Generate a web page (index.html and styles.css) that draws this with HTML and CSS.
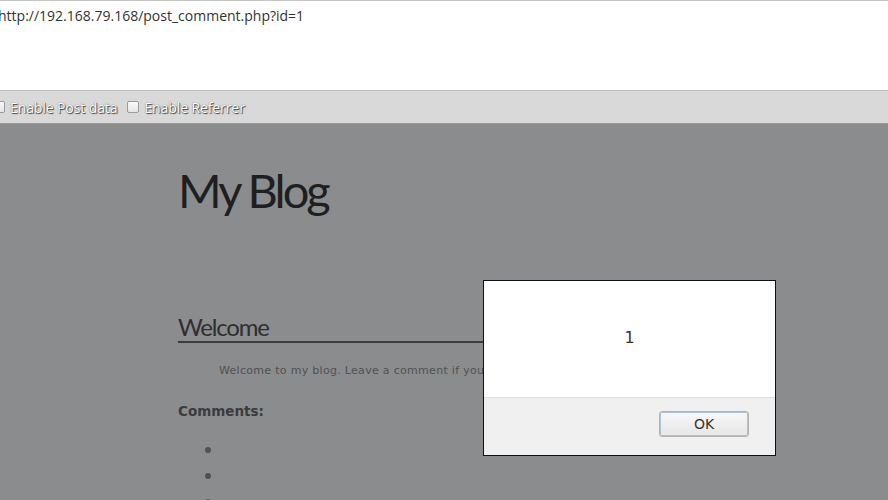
FILE: index.html
```html
<!DOCTYPE html>
<html>
<head>
<meta charset="utf-8">
<link rel="stylesheet" href="styles.css">
</head>
<body>
<div class="urlbox"><div class="url">http://192.168.79.168/post_comment.php?id=1</div></div>
<div class="toolbar">
  <label class="opt"><span class="cb"></span>Enable Post data</label>
  <label class="opt"><span class="cb"></span>Enable Referrer</label>
</div>
<div class="page">
  <div class="content">
    <h1 class="title">My Blog</h1>
    <h2 class="post-title">Welcome</h2>
    <p class="post-body">Welcome to my blog. Leave a comment if you like.</p>
    <div class="comments-h">Comments:</div>
    <ul class="comments">
      <li></li>
      <li></li>
      <li></li>
    </ul>
  </div>
  <div class="dialog">
    <div class="dlg-msg">1</div>
    <div class="dlg-foot"><button class="ok">OK</button></div>
  </div>
</div>
</body>
</html>
```
FILE: styles.css
```css
html, body { margin: 0; padding: 0; }
body { width: 888px; height: 500px; overflow: hidden; background: #8b8c8d; font-family: "Open Sans", sans-serif; }
.urlbox { height: 89px; background: #fff; border-top: 1px solid #c4c4c4; border-bottom: 1px solid #bdbdbd; box-sizing: content-box; }
.url { font-family: "Open Sans", sans-serif; font-size: 14px; color: #333; margin-left: -2px; padding-top: 5px; line-height: 20px; }
.toolbar { height: 32px; background: #d9d9d9; border-bottom: 1px solid #9a9a9a; display: flex; align-items: center; gap: 10px; margin-left: -7px; }
.opt { display: flex; align-items: center; gap: 5px; font-size: 14px; letter-spacing: -0.1px; color: #ffffff; text-shadow: 1px 1px 1px #444, 0 0 1px #555; font-family: "Open Sans", sans-serif; }
.cb { width: 10px; height: 10px; border: 1px solid #9a9a9a; border-radius: 2px; background: linear-gradient(#fafafa, #e4e4e4); display: inline-block; }
.page { position: relative; height: 377px; }
.content { padding-left: 178px; width: 310px; }
.title { margin: 0; padding-top: 36px; font-family: "Lato", sans-serif; font-weight: 400; font-size: 47px; color: #1e1f20; line-height: 60px; letter-spacing: -2.9px; }
.post-title { margin: 93px 0 0 0; font-family: "Lato", sans-serif; font-weight: 400; font-size: 24px; color: #2e2f30; line-height: 28px; border-bottom: 2px solid #3a3b3c; padding-bottom: 0; width: 320px; white-space: nowrap; letter-spacing: -1.2px; }
.post-body { margin: 20px 0 0 41px; font-family: "DejaVu Sans", sans-serif; font-size: 11px; color: #505152; white-space: nowrap; letter-spacing: 0.3px; line-height: 16px; }
.comments-h { margin-top: 22px; font-family: "DejaVu Sans", sans-serif; font-weight: bold; font-size: 13.5px; color: #3a3b3c; line-height: 20px; }
.comments { margin: 20px 0 0 0; padding-left: 27px; list-style: none; }
.comments li { height: 26px; position: relative; }
.comments li::before { content: ""; position: absolute; left: 0; top: 6px; width: 6px; height: 6px; border-radius: 50%; background: #505152; }
.dialog { position: absolute; left: 483px; top: 156px; width: 291px; height: 174px; background: #fff; border: 1px solid #111; display: flex; flex-direction: column; }
.dlg-msg { height: 116px; display: flex; align-items: center; justify-content: center; font-family: "DejaVu Sans", sans-serif; font-size: 16px; color: #333; padding-bottom: 4px; box-sizing: border-box; }
.dlg-foot { flex: 1; background: #f0f0f0; border-top: 1px solid #dedede; display: flex; justify-content: flex-end; align-items: flex-start; padding: 13px 26px 0 0; }
.ok { width: 90px; height: 26px; border: 1px solid #b3b3b3; border-radius: 3px; background: linear-gradient(#f8f8f8, #e6e6e6); box-shadow: inset 0 0 0 1px #aec2d6; font-family: "DejaVu Sans", sans-serif; font-size: 14px; color: #333; padding: 0; }
```
